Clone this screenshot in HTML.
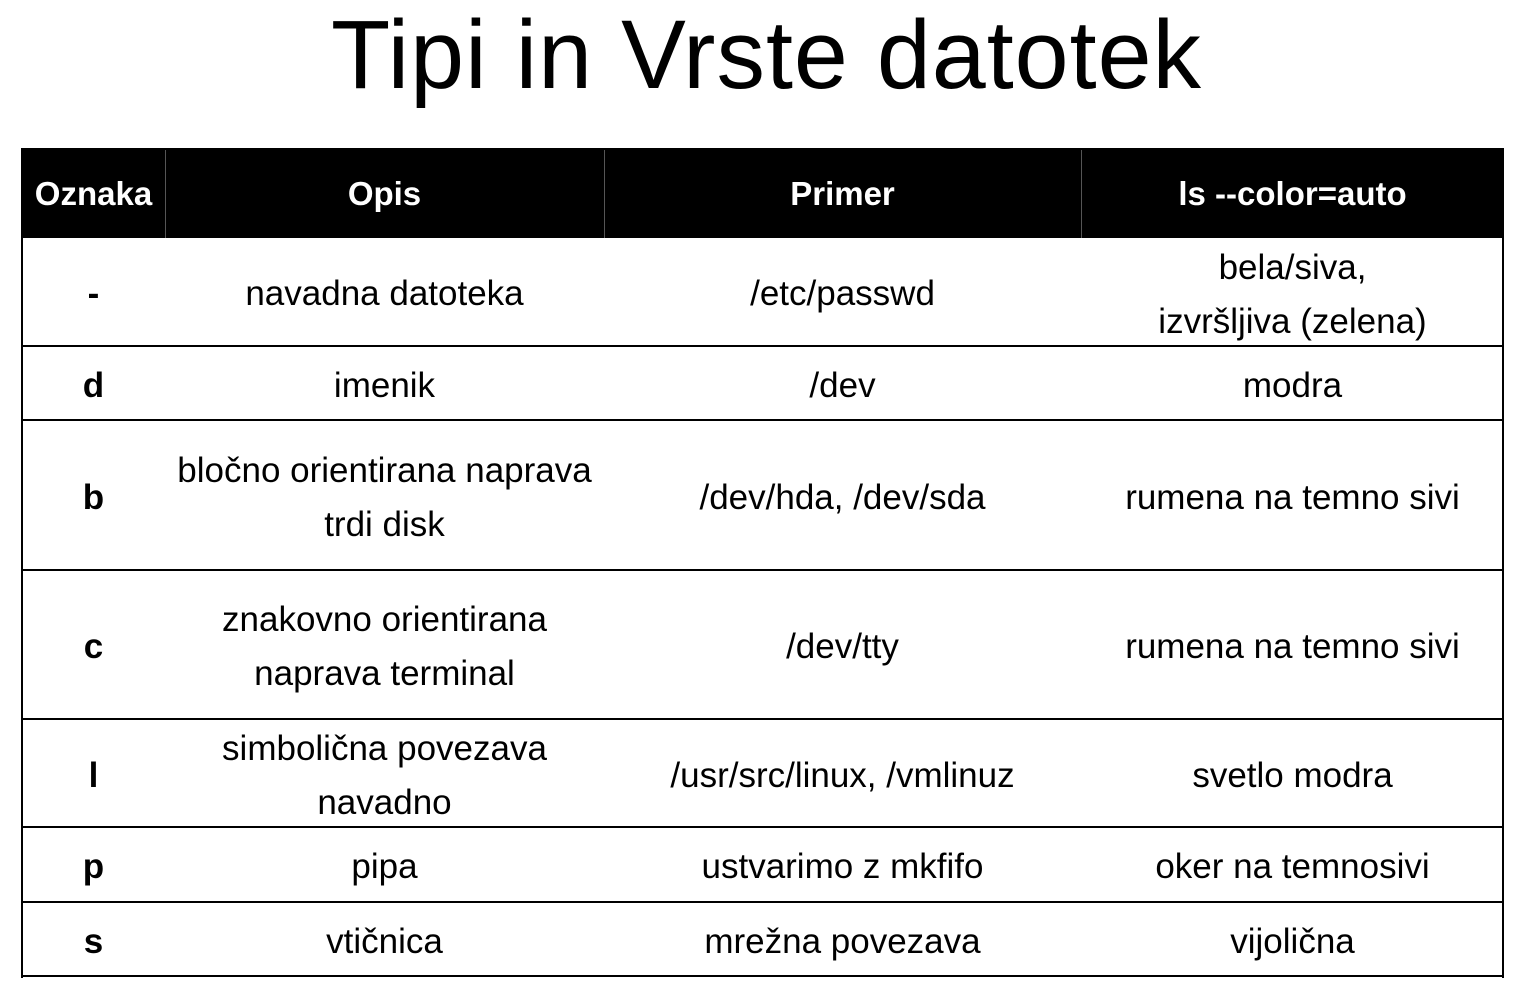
<!DOCTYPE html>
<html><head><meta charset="utf-8"><style>
html,body{margin:0;padding:0;background:#fff;width:1533px;height:1008px;overflow:hidden;font-family:"Liberation Sans",sans-serif;color:#000}
.t{position:absolute;left:0;width:1533px;top:0px;text-align:center;font-size:97px;line-height:110px;letter-spacing:1px}
.c{position:absolute;display:flex;align-items:center;justify-content:center;text-align:center;font-size:35px;line-height:54px;white-space:nowrap}
.h{background:#000;color:#fff;font-weight:bold;font-size:33px}
.hl{position:absolute;background:#555;width:1px;top:150px;height:88px}
.line{position:absolute;left:22px;width:1482px;height:2px;background:#000}
.vl{position:absolute;top:148px;width:2px;height:830px;background:#000}
b{font-weight:bold}
</style></head><body>
<div class="t">Tipi in Vrste datotek</div>
<div class="c h" style="left:22px;top:148px;width:1482px;height:90px"></div>
<div class="c h" style="left:22px;top:148px;width:143px;height:92px;background:none">Oznaka</div>
<div class="c h" style="left:165px;top:148px;width:439px;height:92px;background:none">Opis</div>
<div class="c h" style="left:604px;top:148px;width:477px;height:92px;background:none">Primer</div>
<div class="c h" style="left:1081px;top:148px;width:423px;height:92px;background:none">ls --color=auto</div>
<div class="hl" style="left:165px"></div><div class="hl" style="left:604px"></div><div class="hl" style="left:1081px"></div>
<div class="vl" style="left:21px"></div><div class="vl" style="left:1502px"></div>
<div class="line" style="top:345px"></div>
<div class="line" style="top:419px"></div>
<div class="line" style="top:569px"></div>
<div class="line" style="top:718px"></div>
<div class="line" style="top:826px"></div>
<div class="line" style="top:901px"></div>
<div class="line" style="top:975px"></div>

<div class="c" style="left:22px;top:240px;width:143px;height:108px"><b>-</b></div>
<div class="c" style="left:165px;top:240px;width:439px;height:108px">navadna datoteka</div>
<div class="c" style="left:604px;top:240px;width:477px;height:108px">/etc/passwd</div>
<div class="c" style="left:1081px;top:240px;width:423px;height:110px">bela/siva,<br>izvršljiva (zelena)</div>

<div class="c" style="left:22px;top:349px;width:143px;height:73px"><b>d</b></div>
<div class="c" style="left:165px;top:349px;width:439px;height:73px">imenik</div>
<div class="c" style="left:604px;top:349px;width:477px;height:73px">/dev</div>
<div class="c" style="left:1081px;top:349px;width:423px;height:73px">modra</div>

<div class="c" style="left:22px;top:423px;width:143px;height:149px"><b>b</b></div>
<div class="c" style="left:165px;top:423px;width:439px;height:149px">bločno orientirana naprava<br>trdi disk</div>
<div class="c" style="left:604px;top:423px;width:477px;height:149px">/dev/hda, /dev/sda</div>
<div class="c" style="left:1081px;top:423px;width:423px;height:149px">rumena na temno sivi</div>

<div class="c" style="left:22px;top:573px;width:143px;height:148px"><b>c</b></div>
<div class="c" style="left:165px;top:573px;width:439px;height:148px">znakovno orientirana<br>naprava terminal</div>
<div class="c" style="left:604px;top:573px;width:477px;height:148px">/dev/tty</div>
<div class="c" style="left:1081px;top:573px;width:423px;height:148px">rumena na temno sivi</div>

<div class="c" style="left:22px;top:722px;width:143px;height:107px"><b>l</b></div>
<div class="c" style="left:165px;top:722px;width:439px;height:107px">simbolična povezava<br>navadno</div>
<div class="c" style="left:604px;top:722px;width:477px;height:107px">/usr/src/linux, /vmlinuz</div>
<div class="c" style="left:1081px;top:722px;width:423px;height:107px">svetlo modra</div>

<div class="c" style="left:22px;top:830px;width:143px;height:74px"><b>p</b></div>
<div class="c" style="left:165px;top:830px;width:439px;height:74px">pipa</div>
<div class="c" style="left:604px;top:830px;width:477px;height:74px">ustvarimo z mkfifo</div>
<div class="c" style="left:1081px;top:830px;width:423px;height:74px">oker na temnosivi</div>

<div class="c" style="left:22px;top:905px;width:143px;height:73px"><b>s</b></div>
<div class="c" style="left:165px;top:905px;width:439px;height:73px">vtičnica</div>
<div class="c" style="left:604px;top:905px;width:477px;height:73px">mrežna povezava</div>
<div class="c" style="left:1081px;top:905px;width:423px;height:73px">vijolična</div>
</body></html>
